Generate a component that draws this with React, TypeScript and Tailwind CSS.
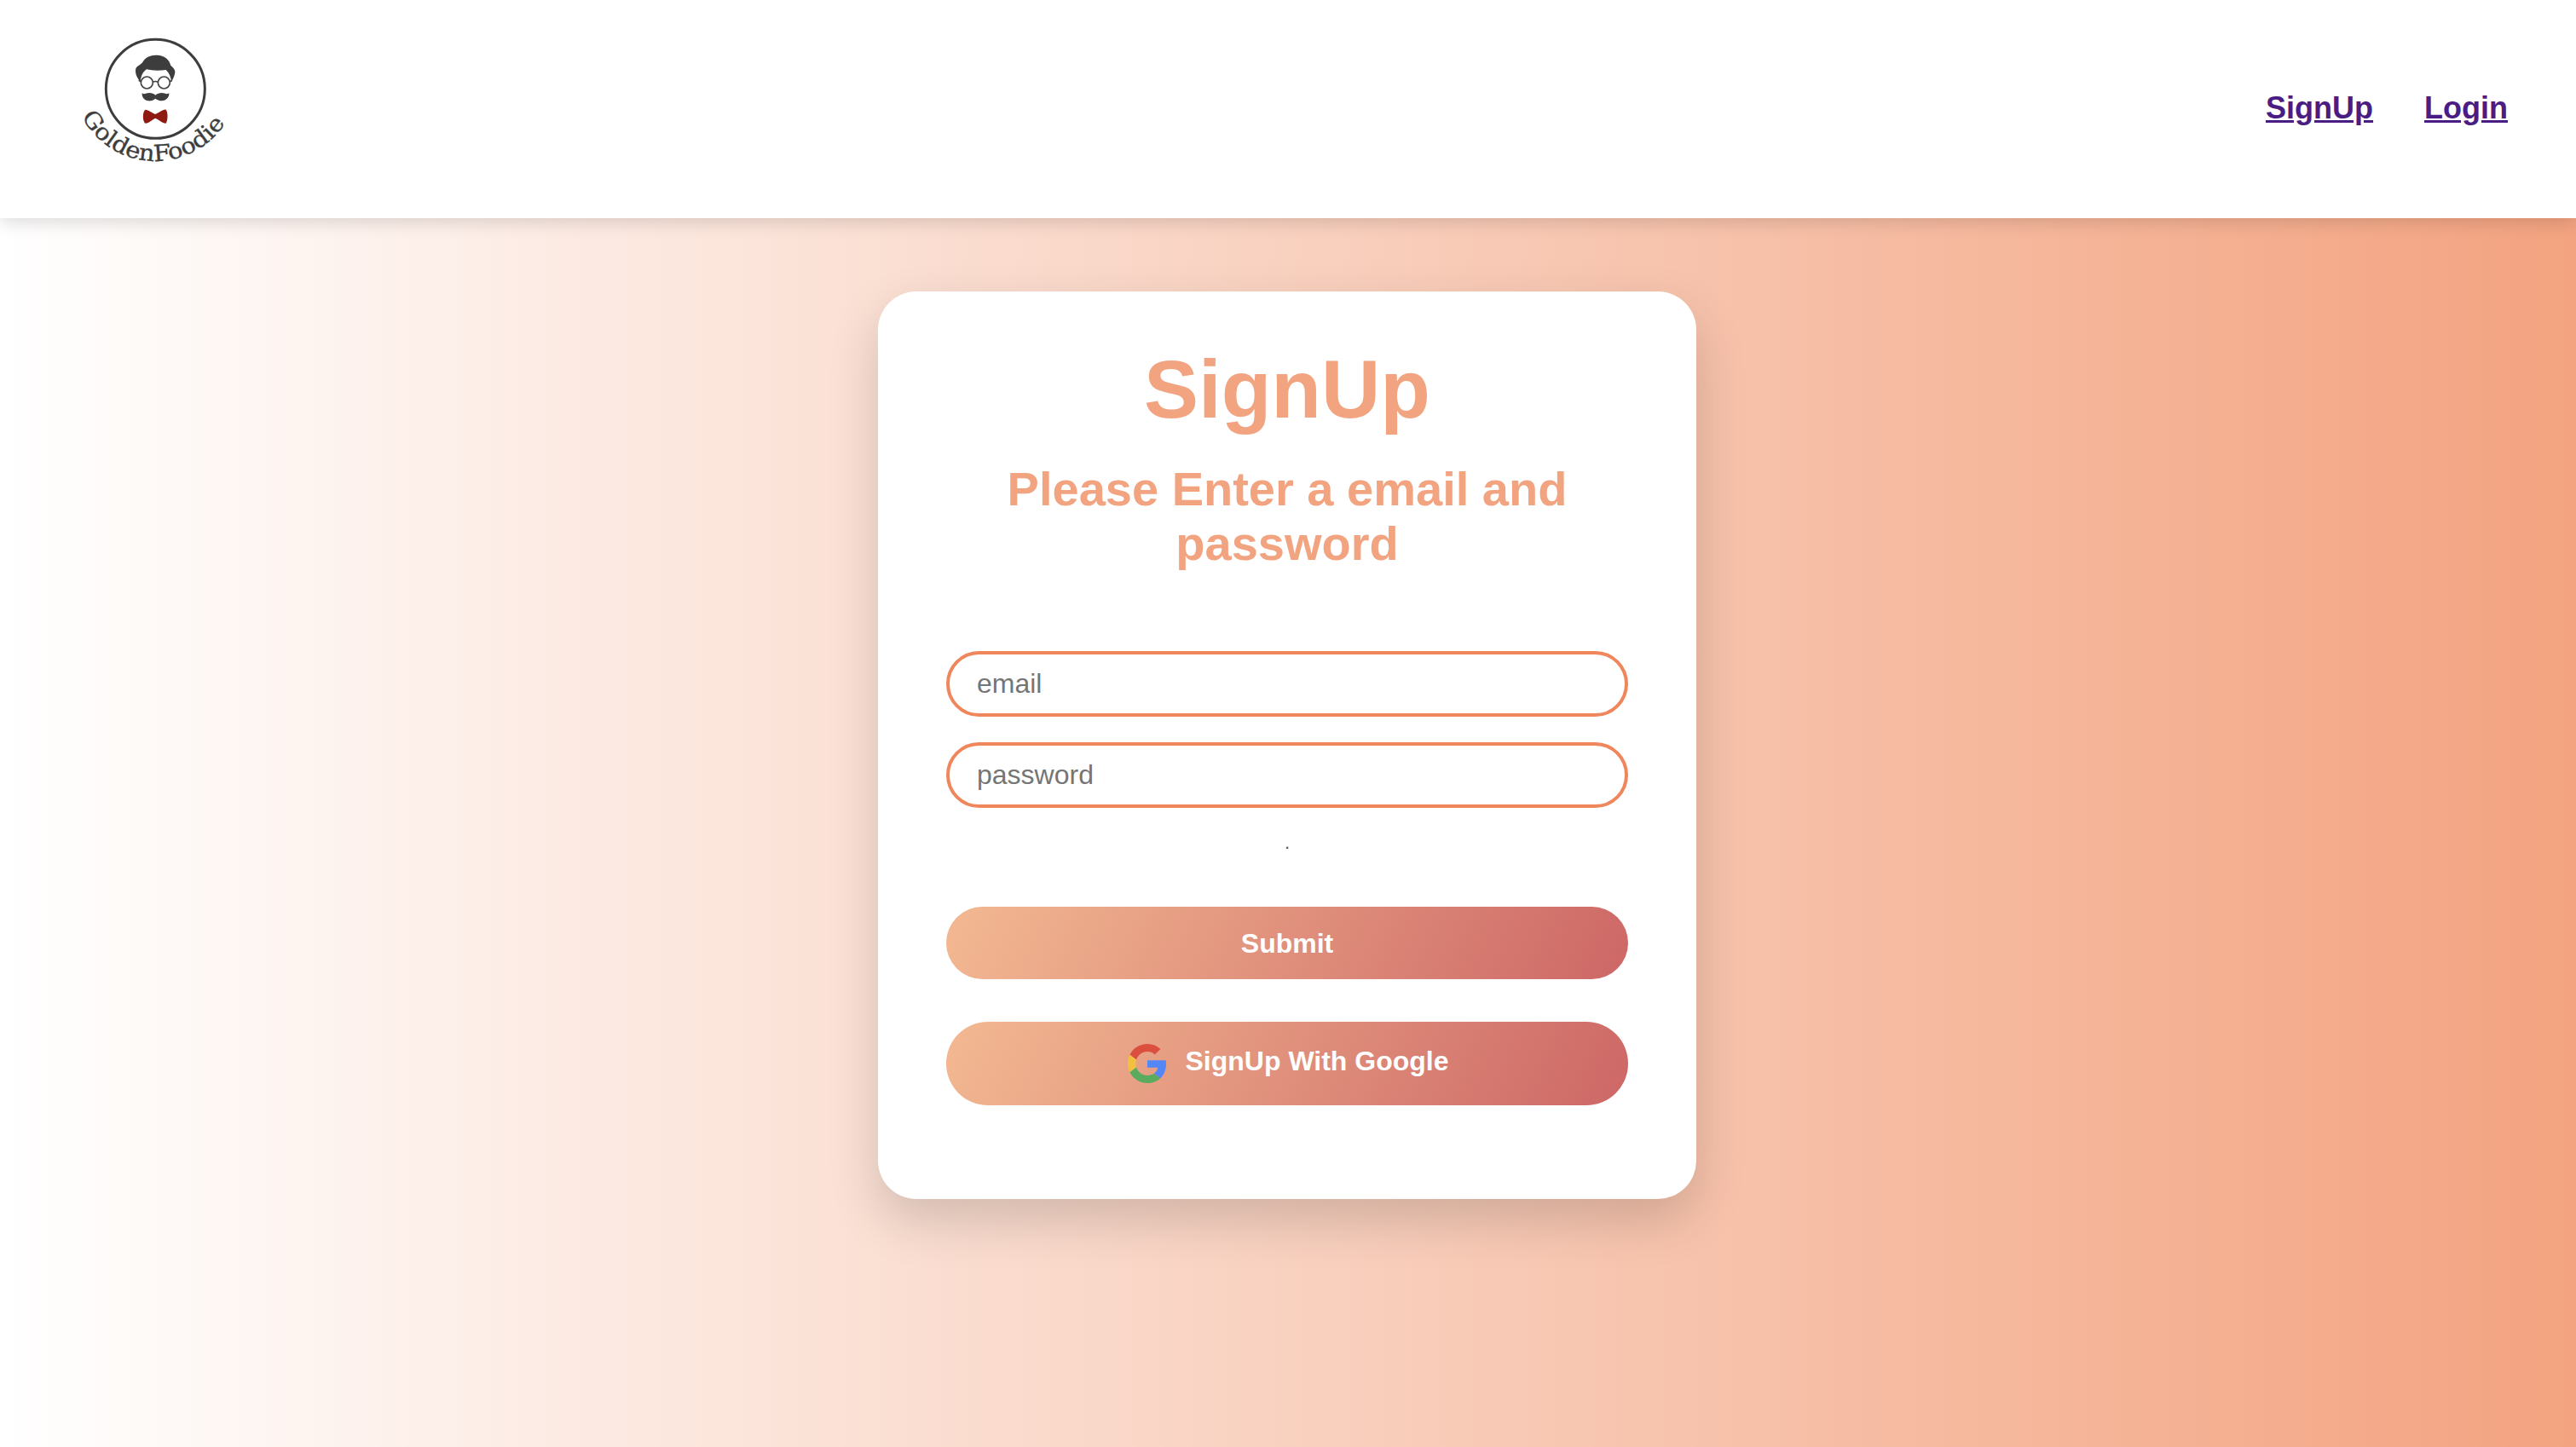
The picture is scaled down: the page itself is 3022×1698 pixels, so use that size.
import React from "react";

const Logo = () => (
  <svg viewBox="0 0 720 600" className="w-[240px] h-[200px] mb-[14px] shrink-0">
    <circle cx="367" cy="250" r="174" fill="none" stroke="#3d3d3d" strokeWidth="9" />
    {/* hair */}
    <path
      d="M314 226 C303 212 294 196 298 178 C303 168 314 166 322 156 C330 138 352 130 372 131 C398 132 416 146 421 168 C428 174 437 182 436 192 C434 206 428 216 423 226 C422 210 416 194 404 183 C382 186 354 186 336 181 C322 190 316 206 314 226 Z"
      fill="#3d3d3d"
    />
    {/* glasses */}
    <g fill="none" stroke="#444" strokeWidth="5">
      <circle cx="337" cy="228" r="21" />
      <circle cx="397" cy="228" r="21" />
      <path d="M358 226 Q367 221 376 226 M316 224 L308 220 M418 224 L426 220" />
    </g>
    {/* moustache */}
    <path
      d="M320 264 C326 272 334 264 346 264 C354 264 362 267 367 272 C373 267 381 264 389 264 C400 264 408 272 415 264 C417 278 404 292 390 292 C380 292 372 288 367 284 C361 289 352 293 342 292 C329 291 318 279 320 264 Z"
      fill="#3d3d3d"
    />
    {/* bow tie */}
    <path
      d="M331 323 C342 323 356 335 367 339 C378 335 394 321 404 323 C412 332 411 362 404 371 C394 373 378 358 367 353 C356 358 342 373 331 371 C321 362 321 332 331 323 Z"
      fill="#8e1a12"
    />
    <defs>
      <path id="logoArc" d="M74 211 A293 293 0 0 0 660 211" />
    </defs>
    <text
      fill="#3d3d3d"
      stroke="#3d3d3d"
      strokeWidth="1"
      fontSize="80"
      textAnchor="middle"
      className="font-['DejaVu_Serif',serif]"
      textLength="610"
      lengthAdjust="spacingAndGlyphs"
    >
      <textPath href="#logoArc" startOffset="48.5%">
        GoldenFoodie
      </textPath>
    </text>
  </svg>
);

const GoogleIcon = () => (
  <svg viewBox="0 0 48 48" className="w-[46px] h-[46px] shrink-0 ml-[2px]">
    <path fill="#db4f3f" d="M24 9.5c3.54 0 6.71 1.22 9.21 3.6l6.85-6.85C35.9 2.38 30.47 0 24 0 14.62 0 6.51 5.38 2.56 13.22l7.98 6.19C12.43 13.72 17.74 9.5 24 9.5z" />
    <path fill="#5486f5" d="M46.98 24.55c0-1.57-.15-3.09-.38-4.55H24v9.02h12.94c-.58 2.96-2.26 5.48-4.78 7.18l7.73 6c4.51-4.18 7.09-10.36 7.09-17.65z" />
    <path fill="#f2c142" d="M10.53 28.59c-.48-1.45-.76-2.99-.76-4.59s.27-3.14.76-4.59l-7.98-6.19C.92 16.46 0 20.12 0 24c0 3.88.92 7.54 2.56 10.78l7.97-6.19z" />
    <path fill="#5aab5e" d="M24 48c6.48 0 11.93-2.13 15.89-5.81l-7.73-6c-2.15 1.45-4.92 2.3-8.16 2.3-6.26 0-11.57-4.22-13.47-9.91l-7.98 6.19C6.51 42.62 14.62 48 24 48z" />
  </svg>
);

const App = () => {
  return (
    <div className="min-h-screen bg-[linear-gradient(to_right,#ffffff,#f3a380)] font-['Liberation_Sans',Arial,sans-serif]">
      {/* Header */}
      <header className="h-[256px] bg-white flex items-center justify-between pl-[60px] pr-[80px] shadow-[0_4px_20px_rgba(0,0,0,0.15)]">
        <Logo />
        <nav className="flex gap-[60px] text-[36px] font-bold text-[#4a1d85] underline mb-[3px]">
          <a href="#signup">SignUp</a>
          <a href="#login">Login</a>
        </nav>
      </header>

      {/* Card */}
      <main className="flex justify-center pt-[86px] pb-[291px] pr-[2px]">
        <div className="w-[960px] bg-white rounded-[45px] px-[80px] pt-[60px] pb-[110px] shadow-[0_25px_60px_rgba(0,0,0,0.16)]">
          <h1 className="text-[96px] leading-[110px] font-bold text-[#f2a380] text-center">SignUp</h1>
          <h2 className="mt-[30px] text-[56px] leading-[64px] font-bold text-[#f2a380] text-center">
            Please Enter a email and password
          </h2>

          <form className="mt-[94px]" onSubmit={(e) => e.preventDefault()}>
            <div className="flex flex-col gap-[30px]">
              <input
                type="email"
                placeholder="email"
                className="h-[77px] w-full rounded-full border-4 border-[#f0865c] bg-white px-8 text-[32px] placeholder:text-[#757575] outline-none"
              />
              <input
                type="password"
                placeholder="password"
                className="h-[77px] w-full rounded-full border-4 border-[#f0865c] bg-white px-8 text-[32px] placeholder:text-[#757575] outline-none"
              />
            </div>

            <p className="h-[116px] pt-[33px] text-center text-[22px] leading-[16px] text-[#555555]">.</p>

            <button
              type="submit"
              className="h-[85px] w-full rounded-full bg-[linear-gradient(115deg,#f3b992,#cd6766)] text-[32px] font-bold text-white"
            >
              Submit
            </button>
            <button
              type="button"
              className="mt-[50px] h-[98px] w-full rounded-full bg-[linear-gradient(115deg,#f3b992,#cd6766)] text-[32px] font-bold text-white flex items-center justify-center gap-[22px]"
            >
              <GoogleIcon />
              <span className="pb-[7px]">SignUp With Google</span>
            </button>
          </form>
        </div>
      </main>
    </div>
  );
};

export default App;
